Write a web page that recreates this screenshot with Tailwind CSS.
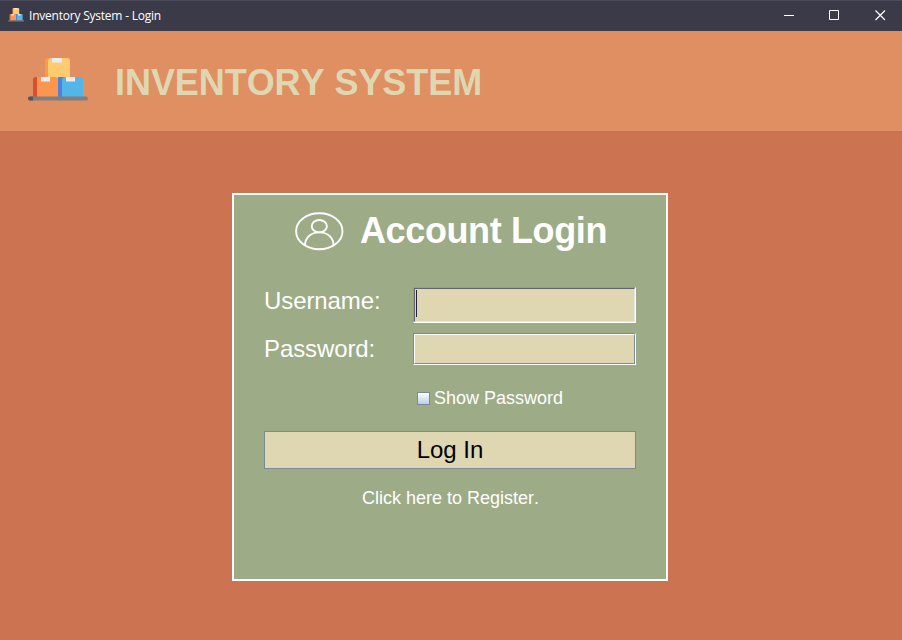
<!DOCTYPE html>
<html lang="en">
<head>
<meta charset="utf-8">
<title>Inventory System - Login</title>
<script src="https://cdn.jsdelivr.net/npm/@tailwindcss/browser@4"></script>
</head>
<body class="w-[902px] h-[640px] overflow-hidden flex flex-col bg-[#cc7351] font-['Liberation_Sans',Arial,sans-serif] [font-kerning:none]">
<svg class="hidden">
  <symbol id="boxes" viewBox="0 0 60 44">
    <path d="M17 20V3q0-3 3-3h4v20z" fill="#fa9a50"/>
    <path d="M20 20V3q0-3 3-3h16q3 0 3 3v17z" fill="#ffcb6f"/>
    <path d="M24 0h10v4.500h-10z" fill="#ececf0"/>
    <path d="M5 39V22q0-3 3-3h4v20z" fill="#d9502f"/>
    <path d="M9 39V19h18q3 0 3 3v17z" fill="#fa9650"/>
    <path d="M13 19h9v4.500h-9z" fill="#ececf0"/>
    <path d="M30 39V19h6v20z" fill="#4d82d6"/>
    <path d="M34 39V22q0-3 3-3h15q3 0 3 3v17z" fill="#54b5e8"/>
    <path d="M38 19h9v4.500h-9z" fill="#ececf0"/>
    <rect y="38.500" width="60" height="4" rx="2" fill="#7f7f7f"/>
    <path d="M5 38.500H2a2 2 0 0 0 0 4h3z" fill="#55565a"/>
  </symbol>
</svg>
<header class="h-[31px] shrink-0 bg-[#3b3a48] border-t border-[#4b4a58] flex items-center text-white">
  <svg class="ml-2 w-4 h-[14px] -mt-0.5" viewBox="0 0 60 44" preserveAspectRatio="none"><use href="#boxes" width="60" height="44"/></svg>
  <span class="ml-[5px] text-[12px] leading-[16px] font-['Open_Sans',sans-serif] tracking-[-0.22px]">Inventory System - Login</span>
  <svg class="ml-auto mr-4 -mt-0.5 w-[102px] h-[11px]" viewBox="0 0 102 11" fill="none" stroke="#fff">
    <path d="M0 5.500h10M45.500.5h9v9h-9z"/>
    <path d="M91.500.5l9.500 9.500M101 .5l-9.500 9.500" stroke-width="1.200"/>
  </svg>
</header>
<div class="h-[100px] shrink-0 bg-[#e08f62] flex items-center pl-7">
  <svg class="w-[60px] h-11 -mt-0.5"><use href="#boxes"/></svg>
  <h1 class="ml-[27px] mt-1 text-[36px] leading-[42px] font-bold text-[#dfd7b1] whitespace-nowrap tracking-[-0.06px]">INVENTORY SYSTEM</h1>
</div>
<main class="ml-[232px] mt-[62px] w-[436px] h-[388px] shrink-0 border-2 border-white bg-[#9dab86] text-white px-[30px]">
  <div class="flex items-center pl-[31px] pt-[15px]">
    <svg class="w-[49px] h-[39px]" viewBox="0 0 49 39" fill="none" stroke="#fff" stroke-width="1.900">
      <ellipse cx="24.300" cy="19.200" rx="23.200" ry="18"/>
      <ellipse cx="24.300" cy="14.200" rx="7.600" ry="6.200"/>
      <path d="M10 33.500C10 25.500 16 20.400 24.300 20.400S38.600 25.500 38.600 33.500"/>
    </svg>
    <h2 class="ml-4 text-[36px] leading-[42px] font-bold whitespace-nowrap tracking-[-0.38px]">Account Login</h2>
  </div>
  <div class="flex mt-[35px] h-9">
    <label class="w-[149px] text-[24px] leading-7 tracking-[-0.1px]">Username:</label>
    <div class="w-[223px] h-9 border border-t-[#9a9a96] border-l-[#9a9a96] border-r-white border-b-white">
      <div class="h-full bg-[#dfd7b1] border border-t-[#646473] border-l-[#646473] border-r-[#e5e5e5] border-b-[#e5e5e5]"><div class="ml-px mt-px w-px h-[27px] bg-[#222238]"></div></div>
    </div>
  </div>
  <div class="flex mt-[10px] h-8">
    <label class="w-[149px] mt-0.5 text-[24px] leading-7 tracking-[-0.1px]">Password:</label>
    <div class="w-[223px] h-8 border border-t-[#7a8a99] border-l-[#7a8a99] border-r-white border-b-white">
      <div class="h-full bg-[#dfd7b1] border border-t-white border-l-white border-r-[#7a8a99] border-b-[#7a8a99]"></div>
    </div>
  </div>
  <div class="flex items-center mt-[22px] pl-[153px] h-[22px] text-[18px]">
    <span class="w-[13px] h-[13px] mt-px border border-[#7a8a99] bg-linear-to-b from-white to-[#b8cfe5]"></span>
    <span class="ml-1 leading-[22px] whitespace-nowrap">Show Password</span>
  </div>
  <button class="block mt-[22px] w-[372px] h-[38px] border border-[#7a8a99] bg-[#dfd7b1] text-black text-[24px] leading-[36px]">Log In</button>
  <p class="mt-[18px] pl-px text-center text-[18px] leading-[22px]">Click here to Register.</p>
</main>
</body>
</html>
